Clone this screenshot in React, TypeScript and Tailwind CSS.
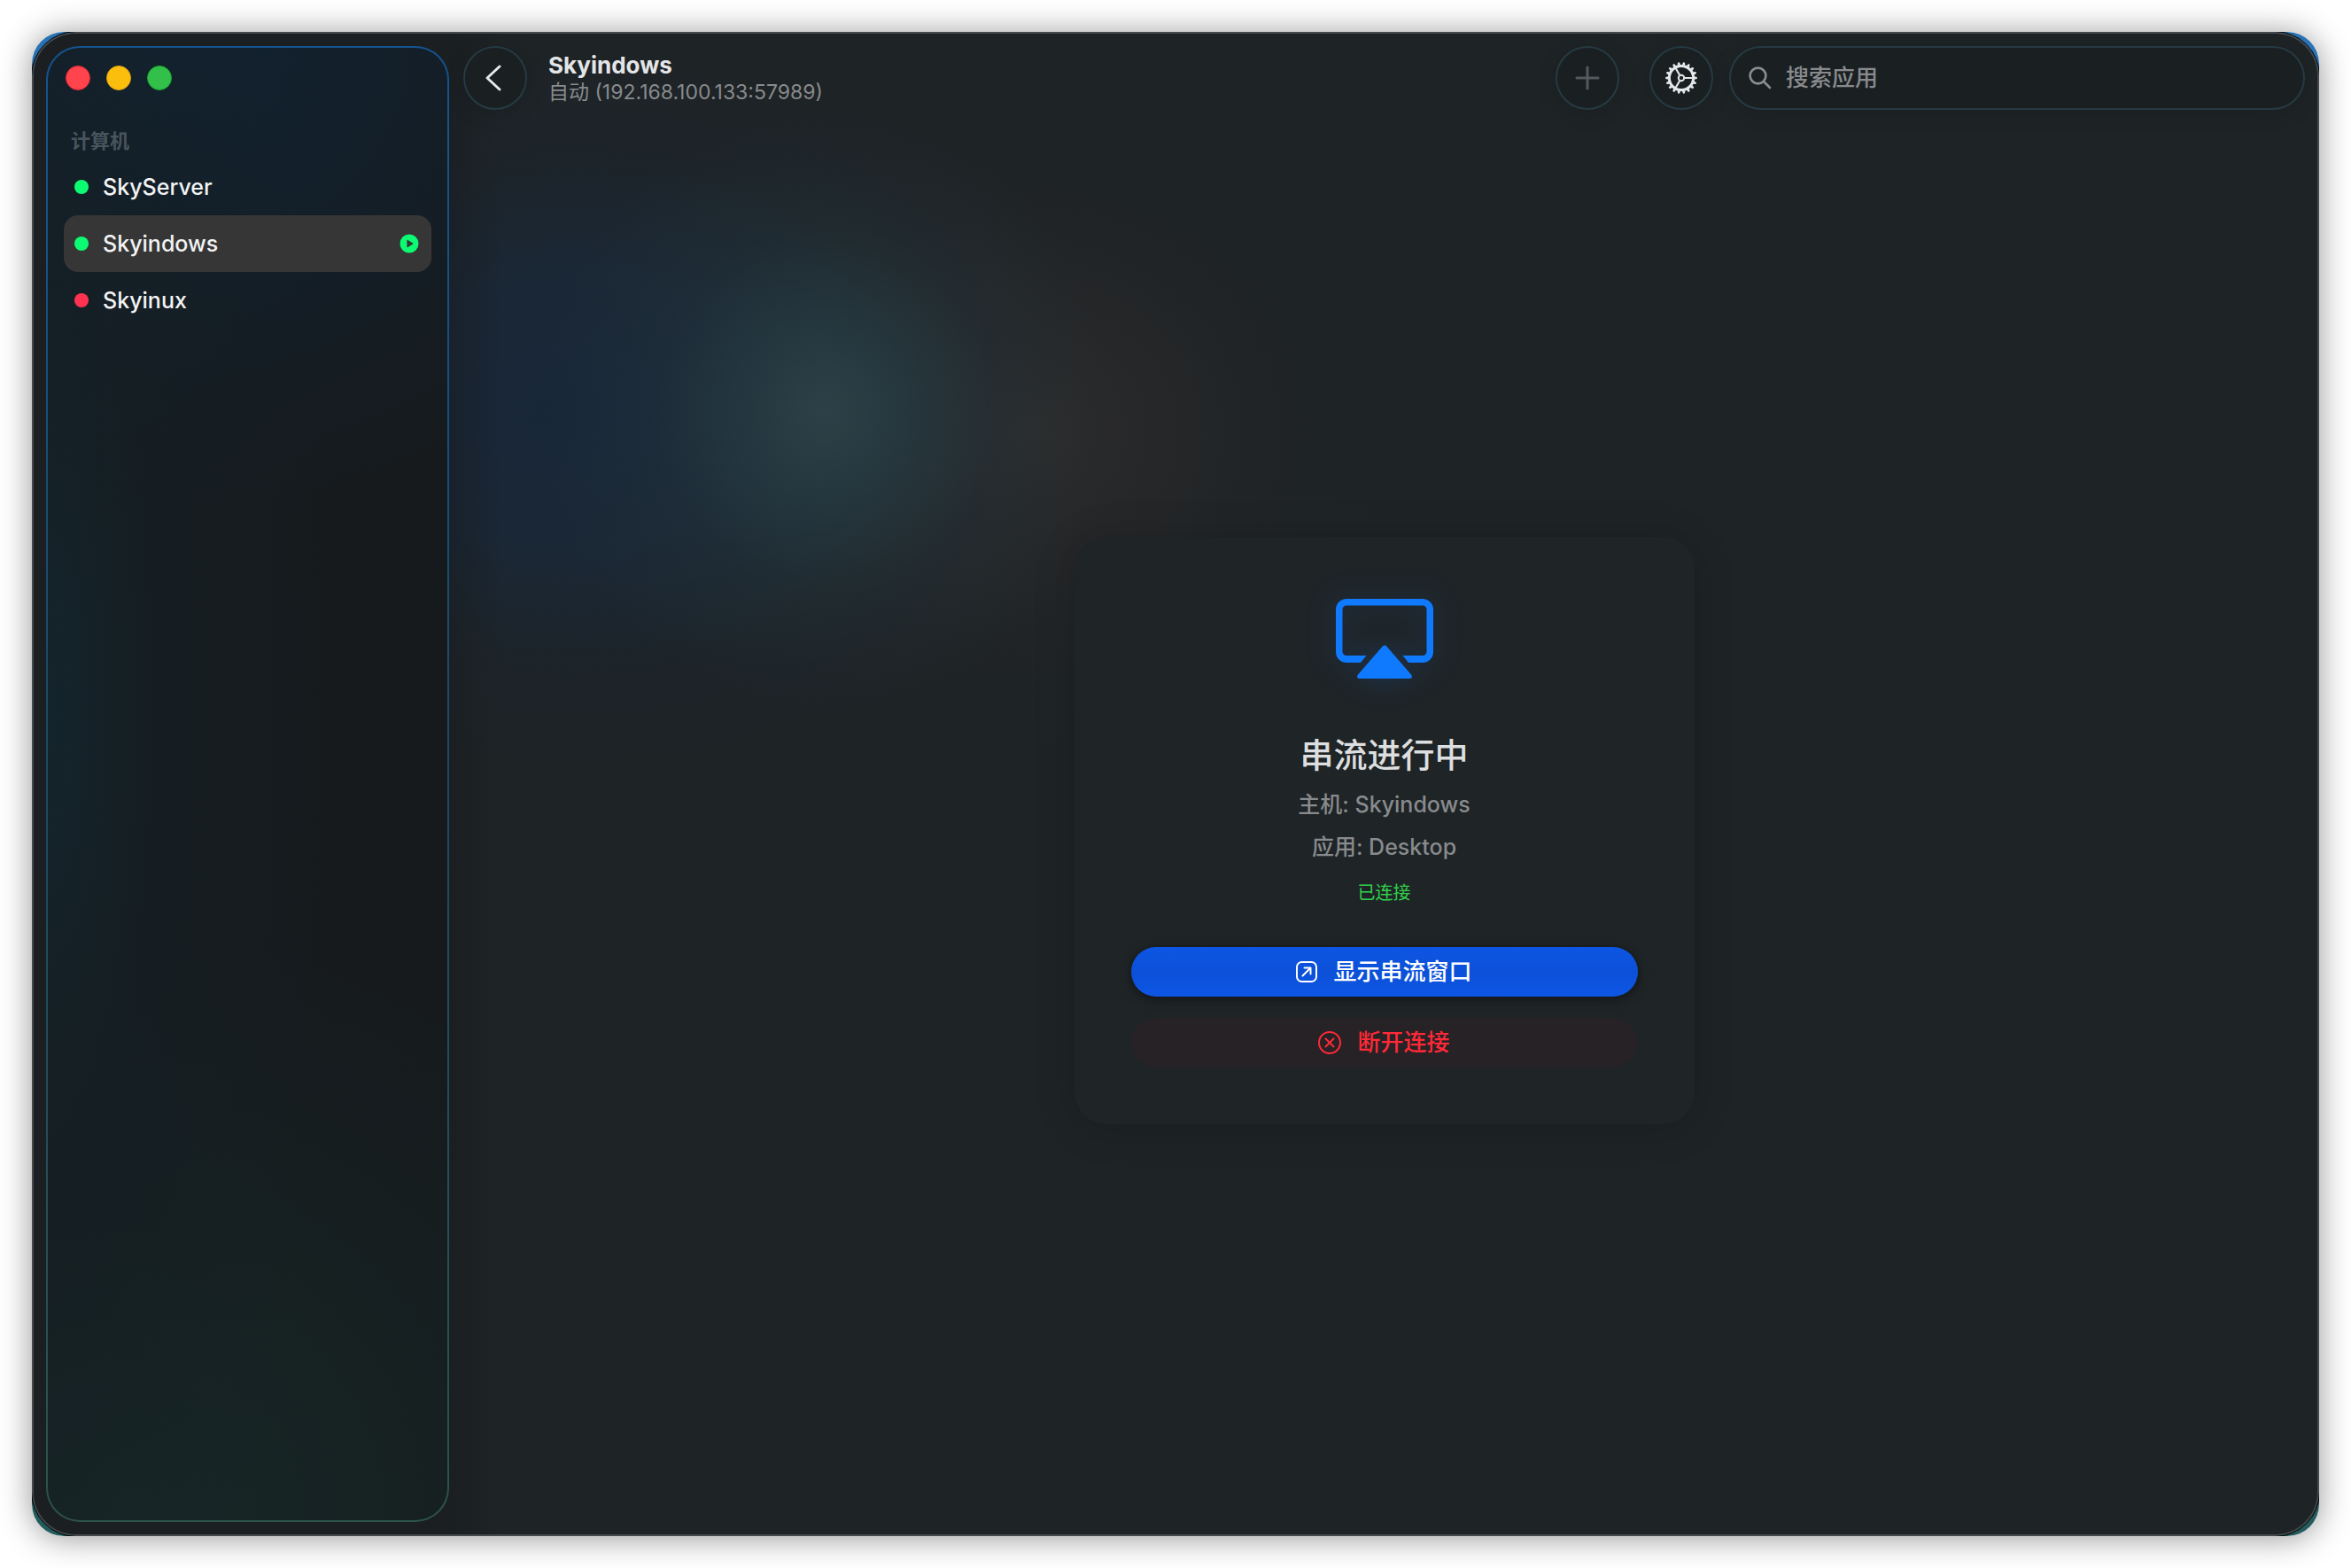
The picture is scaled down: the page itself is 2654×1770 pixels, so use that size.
import { ReactNode } from "react";

type Host = { name: string; online: boolean; streaming?: boolean };

const hosts: Host[] = [
  { name: "SkyServer", online: true },
  { name: "Skyindows", online: true, streaming: true },
  { name: "Skyinux", online: false },
];

const glassRing =
  "border-2 border-[#263a42] bg-[#1a1f22] shadow-[0_4px_24px_rgba(0,0,0,0.12)]";

function TrafficLights() {
  return (
    <div className="flex gap-[18px] px-[2px]">
      <button aria-label="关闭" className="size-7 rounded-full border border-[#e02834] bg-[#ff444e]" />
      <button aria-label="最小化" className="size-7 rounded-full border border-[#dca012] bg-[#fbbe0d]" />
      <button aria-label="缩放" className="size-7 rounded-full border border-[#17a52c] bg-[#33c04a]" />
    </div>
  );
}

function PlayBadge() {
  return (
    <svg viewBox="0 0 22 22" className="size-[22px]" aria-hidden="true">
      <circle cx="11" cy="11" r="10.5" fill="#0dfb72" />
      <path d="M8.4 7.2v7.6c0 .4.4.6.7.4l6-3.7c.4-.2.4-.7 0-.9l-6-3.8c-.3-.2-.7 0-.7.4Z" fill="#363636" />
    </svg>
  );
}

function HostRow({ host }: { host: Host }) {
  return (
    <li>
      <button
        className={
          host.streaming
            ? "flex h-16 w-full items-center rounded-2xl bg-[#363636] pr-[14px] pl-3 text-left"
            : "flex h-16 w-full items-center rounded-2xl pr-[14px] pl-3 text-left"
        }
      >
        <span className={host.online ? "size-4 rounded-full bg-[#0dfb72]" : "size-4 rounded-full bg-[#ff3350]"} />
        <span className="ml-4 flex-1 text-[25px] leading-8 font-medium text-[#f2f3f3]">{host.name}</span>
        {host.streaming && <PlayBadge />}
      </button>
    </li>
  );
}

function Sidebar() {
  return (
    <div className="flex w-[471px] shrink-0 bg-[#1b1f22] py-4 pl-4">
      <aside className="flex-1 rounded-[38px] bg-linear-to-b from-[#14548f] via-[#1b4a63] to-[#2c5349] p-[2px]">
        <div className="h-full rounded-[36px] bg-[#161a1d] bg-[radial-gradient(ellipse_70%_80%_at_0%_45%,#14242c_0%,#151f24aa_40%,transparent_100%),radial-gradient(ellipse_150%_32%_at_20%_0%,#112333_0%,transparent_100%),radial-gradient(ellipse_150%_40%_at_20%_100%,#172726_0%,transparent_100%)] px-[18px] pt-5">
          <TrafficLights />
          <h2 className="mt-[41px] px-2 text-[22px] leading-8 font-semibold text-[#48545c]">计算机</h2>
          <ul className="mt-1">
            {hosts.map((h) => (
              <HostRow key={h.name} host={h} />
            ))}
          </ul>
        </div>
      </aside>
    </div>
  );
}

function RoundButton({ label, children }: { label: string; children: ReactNode }) {
  return (
    <button aria-label={label} className={`flex size-[72px] shrink-0 items-center justify-center rounded-full ${glassRing}`}>
      {children}
    </button>
  );
}

function GearIcon() {
  const teeth = Array.from({ length: 18 }, (_, i) => i * 20);
  return (
    <svg viewBox="-18 -18 36 36" className="size-9" fill="none" stroke="#e6e8e8" aria-hidden="true">
      <circle r="13.6" strokeWidth="3" />
      {teeth.map((a) => (
        <path key={a} d="M14.5 -1.8L17.8 -1V1L14.5 1.8Z" fill="#e6e8e8" stroke="none" transform={`rotate(${a})`} />
      ))}
      <circle r="3.2" strokeWidth="2" />
      {[0, 120, 240].map((a) => (
        <path key={a} d="M4 0H13" strokeWidth="2.2" transform={`rotate(${a})`} />
      ))}
    </svg>
  );
}

function Header() {
  return (
    <header className="flex h-[104px] shrink-0 items-center px-4">
      <RoundButton label="返回">
        <svg viewBox="0 0 28 32" className="mr-1 h-8 w-7" fill="none" stroke="#e6e8e8" strokeWidth="3" strokeLinecap="round" strokeLinejoin="round" aria-hidden="true">
          <path d="M21 3L7 16l14 13" />
        </svg>
      </RoundButton>
      <div className="ml-6">
        <h1 className="text-[26px] leading-8 font-bold text-[#e4e5e6]">Skyindows</h1>
        <p className="text-[23px] leading-7 text-[#888b8d]">自动 (192.168.100.133:57989)</p>
      </div>
      <div className="ml-auto flex items-center">
        <RoundButton label="添加">
          <svg viewBox="0 0 28 28" className="size-7" fill="none" stroke="#54595c" strokeWidth="3" strokeLinecap="round" aria-hidden="true">
            <path d="M14 2v24M2 14h24" />
          </svg>
        </RoundButton>
        <div className="mr-[18px] ml-[34px]">
          <RoundButton label="设置">
            <GearIcon />
          </RoundButton>
        </div>
        <label className={`flex h-[72px] w-[650px] items-center rounded-full px-5 ${glassRing}`}>
          <svg viewBox="0 0 26 26" className="size-[26px] shrink-0" fill="none" stroke="#8a8d8f" strokeWidth="2.6" strokeLinecap="round" aria-hidden="true">
            <circle cx="10.5" cy="10.5" r="8.9" />
            <path d="M17 17l7 7" />
          </svg>
          <input
            type="search"
            aria-label="搜索应用"
            placeholder="搜索应用"
            className="ml-4 min-w-0 flex-1 bg-transparent text-[26px] leading-8 font-medium text-[#e4e5e6] outline-none placeholder:text-[#888b8d]"
          />
        </label>
      </div>
    </header>
  );
}

function AirPlayIcon() {
  return (
    <svg viewBox="0 0 110 90" className="h-[90px] w-[110px] drop-shadow-[0_0_16px_rgba(16,122,255,0.22)]" fill="#107aff" aria-hidden="true">
      <path d="M12 0H98A12 12 0 0 1 110 12V60A12 12 0 0 1 98 72H82L75.500 64H98A4.500 4.500 0 0 0 102.500 59.500V12A4.500 4.500 0 0 0 98 7.500H12A4.500 4.500 0 0 0 7.500 12V59.500A4.500 4.500 0 0 0 12 64H34.500L28 72H12A12 12 0 0 1 0 60V12A12 12 0 0 1 12 0Z" />
      <path d="M52.800 53.600Q55 51.500 57.200 53.600L85 85.500Q87.500 89.500 83.500 90H26.500Q22.500 89.500 25 85.500Z" />
    </svg>
  );
}

function StreamCard() {
  return (
    <section className="flex w-[700px] flex-col items-center rounded-[36px] bg-[#1f2427] px-16 pt-[70px] pb-16 shadow-[0_4px_48px_rgba(0,0,0,0.16)]">
      <AirPlayIcon />
      <h2 className="mt-[58px] text-[38px] leading-[56px] font-medium text-[#dddedf]">串流进行中</h2>
      <div className="mt-1 flex flex-col items-center text-[25px] leading-[48px] font-medium text-[#888b8d]">
        <p>主机: Skyindows</p>
        <p>应用: Desktop</p>
      </div>
      <p className="mt-3 text-[20px] leading-8 text-[#30d14b]">已连接</p>
      <button className="mt-[45px] flex h-14 w-full items-center justify-center gap-[18px] rounded-full bg-linear-to-b from-[#0d56e4] via-[#0c50d8] to-[#0d56e4] text-[26px] font-medium text-white shadow-[0_2px_12px_rgba(0,0,0,0.5)]">
        <svg viewBox="0 0 24 24" className="size-6" fill="none" stroke="#fff" strokeWidth="2" strokeLinecap="round" strokeLinejoin="round" aria-hidden="true">
          <rect x="1" y="1" width="22" height="22" rx="5.500" />
          <path d="M7.500 16.500L16.500 7.500M9.500 7.500h7v7" />
        </svg>
        显示串流窗口
      </button>
      <button className="mt-6 flex h-14 w-full items-center justify-center gap-[18px] rounded-full bg-[#262225] text-[26px] font-medium text-[#ff2937]">
        <svg viewBox="0 0 26 26" className="size-[26px]" fill="none" stroke="#ff2937" strokeWidth="2" strokeLinecap="round" aria-hidden="true">
          <circle cx="13" cy="13" r="12" />
          <path d="M8.500 8.500l9 9M17.500 8.500l-9 9" />
        </svg>
        断开连接
      </button>
    </section>
  );
}

export default function App() {
  return (
    <div className="min-h-screen bg-white p-9 font-[Inter,'Noto_Sans_CJK_SC',sans-serif]">
      <div className="flex min-h-[calc(100vh-72px)] overflow-hidden rounded-[36px] bg-linear-to-b from-[#2a72b3] to-[#235a5c] shadow-[0_2px_36px_rgba(0,0,0,0.42)]">
        <div className="flex flex-1 overflow-hidden rounded-[50px] border-2 border-[#46494c] bg-[#1e2326] outline outline-black">
          <div className="-m-[2px] flex flex-1">
            <Sidebar />
            <main className="flex min-w-0 flex-1 flex-col bg-[linear-gradient(to_right,#15181b66_0px,transparent_60px),radial-gradient(ellipse_320px_340px_at_425px_428px,#2c4147_0%,#283d44b8_28%,#23353c50_62%,transparent_100%),radial-gradient(ellipse_520px_400px_at_140px_428px,#182739_0%,#1a2838d8_40%,#1c262e60_75%,transparent_100%),radial-gradient(ellipse_400px_360px_at_660px_450px,#2d2c2c_0%,#2a292aa0_35%,#25262740_70%,transparent_100%)]">
              <Header />
              <div className="flex flex-1 items-center justify-center">
                <StreamCard />
              </div>
            </main>
          </div>
        </div>
      </div>
    </div>
  );
}
